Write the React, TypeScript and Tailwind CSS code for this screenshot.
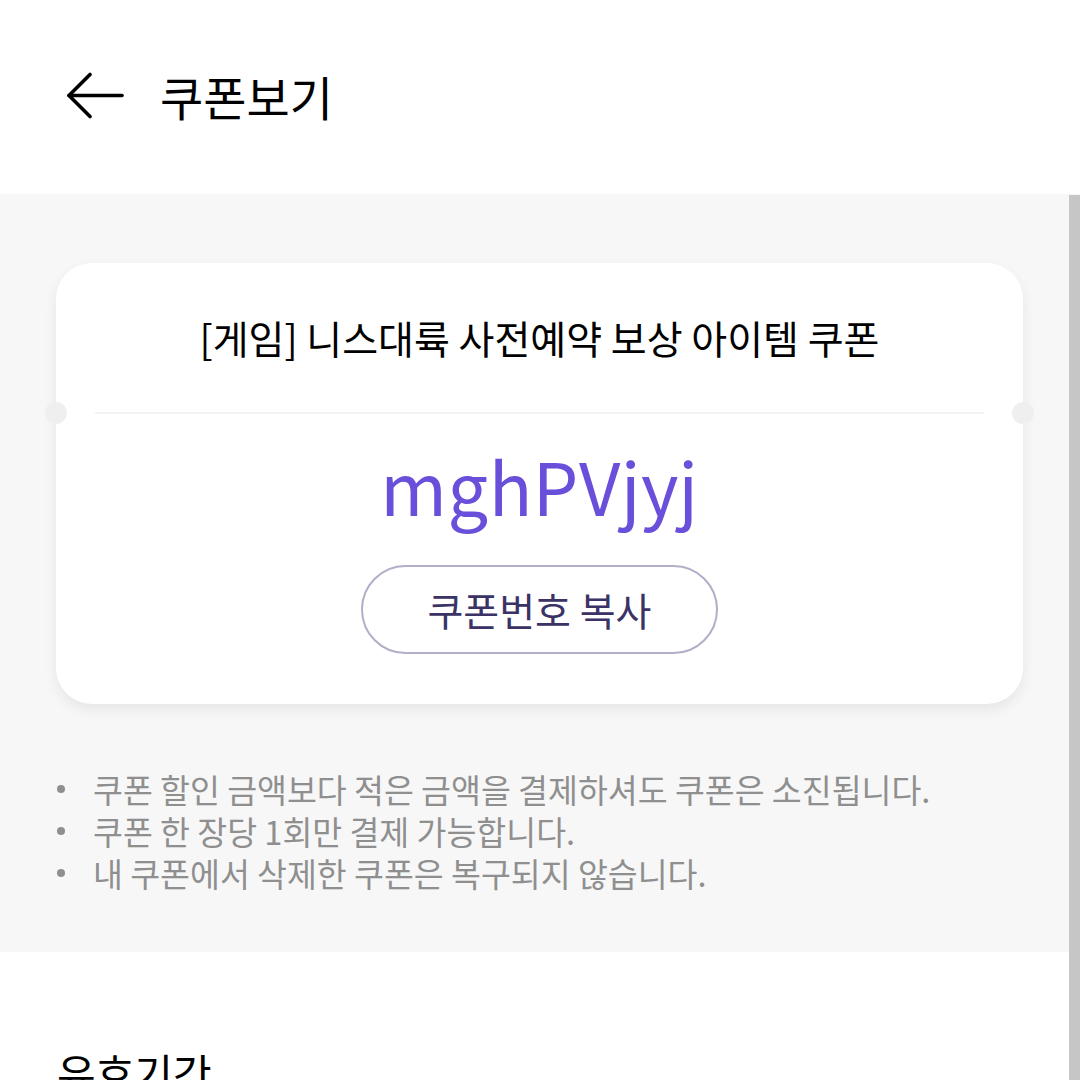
const notes = [
  "쿠폰 할인 금액보다 적은 금액을 결제하셔도 쿠폰은 소진됩니다.",
  "쿠폰 한 장당 1회만 결제 가능합니다.",
  "내 쿠폰에서 삭제한 쿠폰은 복구되지 않습니다.",
]

function BackArrow() {
  return (
    <svg width="58" height="48" viewBox="0 0 58 48" fill="none" stroke="currentColor" strokeWidth="3.6" strokeLinecap="round" strokeLinejoin="round">
      <path d="M3 23.5H56" />
      <path d="M24 2.5L3 23.5L24 44.5" />
    </svg>
  )
}

export default function App() {
  return (
    <div
      className="relative h-[1080px] w-[1080px] overflow-hidden bg-white"
      style={{ fontFamily: '"Noto Sans CJK KR", "Noto Sans", sans-serif' }}
    >
      {/* header */}
      <header className="flex h-[194px] items-center pb-[2px]">
        <button className="ml-[66px] flex items-center text-black">
          <BackArrow />
        </button>
        <h1 className="ml-[36px] text-[47px] font-normal text-black">쿠폰보기</h1>
      </header>

      {/* coupon section */}
      <section className="bg-[#f7f7f7] pb-[58px] pl-[56px] pr-[57px] pt-[69px]">
        <div className="relative rounded-[36px] bg-white shadow-[0_6px_14px_rgba(0,0,0,0.07)]">
          <div className="flex h-[149px] items-center justify-center">
            <p className="text-[39px] text-black">[게임] 니스대륙 사전예약 보상 아이템 쿠폰</p>
          </div>
          <div className="relative">
            <div className="mx-[39px] h-[2px] bg-[#f2f2f2]" />
            <span className="absolute left-[-11px] top-[-10px] h-[22px] w-[22px] rounded-full bg-[#efefef]" />
            <span className="absolute right-[-11px] top-[-10px] h-[22px] w-[22px] rounded-full bg-[#efefef]" />
          </div>
          <div className="flex flex-col items-center pb-[50px] pt-[25px]">
            <p className="text-[72px] leading-[92px] tracking-[0.5px] text-[#6a4fdb]">mghPVjyj</p>
            <button className="mt-[34px] flex h-[89px] w-[357px] items-center justify-center rounded-full border-2 border-[#b3adc8] text-[39px] text-[#3b3366]">
              쿠폰번호 복사
            </button>
          </div>
        </div>

        <ul className="mt-[64px] flex flex-col">
          {notes.map((n) => (
            <li key={n} className="flex h-[42px] items-center text-[32.5px] leading-[42px] text-[#8f8f8f]">
              <span className="ml-[1px] mr-[28px] h-[8px] w-[8px] rounded-full bg-[#8f8f8f]" />
              <span className="leading-[42px]">{n}</span>
            </li>
          ))}
        </ul>
      </section>

      {/* validity section */}
      <section className="px-[57px] pt-[88px]">
        <h2 className="text-[42px] text-black">유효기간</h2>
      </section>

      {/* scrollbar */}
      <div className="absolute bottom-0 right-0 top-[195px] w-[11px] bg-[#c6c6c6]" />
    </div>
  )
}
